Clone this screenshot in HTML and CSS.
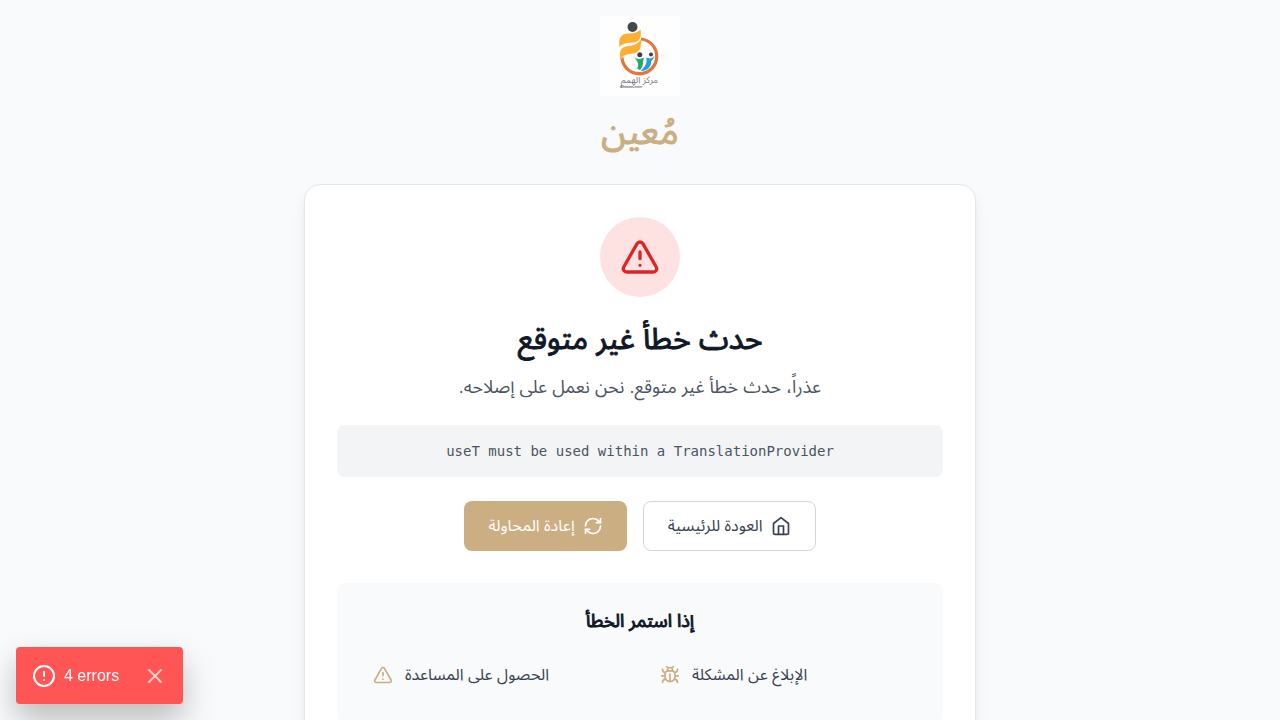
FILE: index.html
```html
<!DOCTYPE html>
<html lang="ar" dir="rtl">
<head>
<meta charset="utf-8">
<meta name="viewport" content="width=device-width, initial-scale=1">
<title>مُعين</title>
<link rel="stylesheet" href="styles.css">
</head>
<body>
<main class="page">
  <header class="brand">
    <svg class="brand-logo" viewBox="0 0 80 80" role="img" aria-label="مركز الهمم">
      <rect width="80" height="80" fill="#fefefe"/>
      <path d="M41 21.500A19 19 0 1 1 20.500 43L23.500 41A15.800 15.800 0 1 0 41 24.500Z" fill="#e2763c"/>
      <circle cx="32.500" cy="11" r="5" fill="#46464f"/>
      <path d="M19.500 31C18 22 21.500 17.500 28 17.500C34 17.500 37 17 40.500 13.500C42 22 39 26 33 26.500C27 27 23 27 19.500 31Z" fill="#fbb033"/>
      <path d="M20.500 43.500C18.500 35 21.500 30.500 28 30C34 29.500 37.500 28 41 23.500C41.800 33 38.500 37 33 37.500C27 38 23 39 20.500 43.500Z" fill="#fbb033"/>
      <circle cx="39.800" cy="38.800" r="2.500" fill="#3d3f49"/>
      <circle cx="51" cy="38.500" r="2" fill="#3d3f49"/>
      <path d="M33 40.500C36.500 43.500 40 43.500 44 41.500C42.500 46 44 50 40 54L37 52.500C39.500 49 38 44.500 33 40.500Z" fill="#27a866"/>
      <path d="M54.500 39.500C52 43.500 49 42.500 46 41.500C48 46 45 51 40.500 55C48 55 51.500 50 51 45.500C52.500 44 54 42.500 54.500 39.500Z" fill="#239fd8"/>
      <text class="logo-name" x="39.500" y="67" text-anchor="middle">مركز الهمم</text>
      <text class="logo-sub" x="31" y="72" text-anchor="middle" direction="ltr">AlhimamCenter</text>
    </svg>
    <h1 class="brand-name">مُعين</h1>
  </header>

  <section class="card">
    <div class="alert-badge">
      <svg class="icon icon-large" viewBox="0 0 24 24"><path d="m21.730 18-8-14a2 2 0 0 0-3.480 0l-8 14A2 2 0 0 0 4 21h16a2 2 0 0 0 1.730-3Z"/><path d="M12 9v4M12 17h.01"/></svg>
    </div>
    <h2 class="card-title">حدث خطأ غير متوقع</h2>
    <p class="card-text">عذراً، حدث خطأ غير متوقع. نحن نعمل على إصلاحه.</p>
    <div class="error-message"><code dir="ltr">useT must be used within a TranslationProvider</code></div>
    <div class="actions">
      <button class="button button-outline" type="button">
        <svg class="icon" viewBox="0 0 24 24"><path d="m3 9 9-7 9 7v11a2 2 0 0 1-2 2H5a2 2 0 0 1-2-2z"/><path d="M9 22V12h6v10"/></svg>
        <span>العودة للرئيسية</span>
      </button>
      <button class="button button-primary" type="button">
        <svg class="icon" viewBox="0 0 24 24"><path d="M3 12a9 9 0 0 1 9-9 9.750 9.750 0 0 1 6.740 2.740L21 8"/><path d="M21 3v5h-5"/><path d="M21 12a9 9 0 0 1-9 9 9.750 9.750 0 0 1-6.740-2.740L3 16"/><path d="M8 16H3v5"/></svg>
        <span>إعادة المحاولة</span>
      </button>
    </div>
    <section class="help">
      <h3 class="help-title">إذا استمر الخطأ</h3>
      <div class="help-links">
        <a class="help-link" href="#report">
          <span>الإبلاغ عن المشكلة</span>
          <svg class="icon" viewBox="0 0 24 24"><path d="m8 2 1.880 1.880M14.120 3.880 16 2M9 7.130v-1a3.003 3.003 0 1 1 6 0v1"/><path d="M12 20c-3.300 0-6-2.700-6-6v-3a4 4 0 0 1 4-4h4a4 4 0 0 1 4 4v3c0 3.300-2.700 6-6 6M12 20v-9M6.530 9C4.600 8.800 3 7.100 3 5M6 13H2M3 21c0-2.100 1.700-3.900 3.800-4M20.970 5c0 2.100-1.600 3.800-3.500 4M22 13h-4M17.200 17c2.100.1 3.800 1.900 3.800 4"/></svg>
        </a>
        <a class="help-link" href="#support">
          <span>الحصول على المساعدة</span>
          <svg class="icon" viewBox="0 0 24 24"><path d="m21.730 18-8-14a2 2 0 0 0-3.480 0l-8 14A2 2 0 0 0 4 21h16a2 2 0 0 0 1.730-3Z"/><path d="M12 9v4M12 17h.01"/></svg>
        </a>
      </div>
    </section>
  </section>
</main>

<div class="toast" dir="ltr" role="alert">
  <svg class="icon icon-medium" viewBox="0 0 24 24"><circle cx="12" cy="12" r="10"/><path d="M12 8v4M12 16h.01"/></svg>
  <span>4 errors</span>
  <button class="toast-close" type="button" aria-label="Close">
    <svg class="icon icon-medium" viewBox="0 0 24 24"><path d="M18 6 6 18M6 6l12 12"/></svg>
  </button>
</div>
</body>
</html>
```

FILE: styles.css
```css
* {
  box-sizing: border-box;
}

body,
h1,
h2,
h3,
p {
  margin: 0;
}

body {
  background: #f9fafb;
  color: #111827;
  font-family: "Liberation Sans", "Noto Sans Arabic", sans-serif;
  font-size: 16px;
  line-height: 24px;
}

button {
  font: inherit;
  cursor: pointer;
}

.page {
  max-width: 704px;
  margin: 0 auto;
  padding: 16px;
  text-align: center;
}

.brand {
  display: flex;
  flex-direction: column;
  align-items: center;
  gap: 16px;
  margin-bottom: 32px;
}

.brand-logo {
  width: 80px;
  height: 80px;
  border-radius: 2px;
}

.logo-name {
  fill: #77777c;
  font-size: 9px;
}

.logo-sub {
  fill: #66666b;
  font-size: 3px;
  font-weight: 700;
}

.brand-name,
.card-title,
.help-title {
  font-weight: 400;
  -webkit-text-stroke: 1px currentColor;
}

.brand-name {
  color: #cbae82;
  font-size: 36px;
  line-height: 40px;
}

.card {
  padding: 32px;
  background: #fff;
  border: 1px solid #e5e7eb;
  border-radius: 16px;
  box-shadow: 0 10px 15px -3px rgb(0 0 0 / 10%), 0 4px 6px -4px rgb(0 0 0 / 10%);
}

.icon {
  flex: none;
  width: 20px;
  height: 20px;
  fill: none;
  stroke: currentColor;
  stroke-width: 2;
  stroke-linecap: round;
  stroke-linejoin: round;
}

.icon-medium {
  width: 24px;
  height: 24px;
}

.icon-large {
  width: 40px;
  height: 40px;
}

.alert-badge {
  display: flex;
  align-items: center;
  justify-content: center;
  width: 80px;
  height: 80px;
  margin: 0 auto 24px;
  border-radius: 50%;
  background: #fee2e2;
  color: #dc2626;
}

.card-title {
  margin-bottom: 16px;
  font-size: 30px;
  line-height: 36px;
}

.card-text {
  margin-bottom: 24px;
  color: #4b5563;
  font-size: 18px;
  line-height: 28px;
}

.error-message {
  display: flex;
  justify-content: center;
  margin-bottom: 24px;
  padding: 16px;
  border-radius: 8px;
  background: #f3f4f6;
  color: #4b5563;
  font-size: 14px;
  line-height: 20px;
}

.error-message code {
  font-family: "DejaVu Sans Mono", monospace;
  font-size: 14px;
}

.actions {
  display: flex;
  flex-wrap: wrap;
  justify-content: center;
  gap: 16px;
  margin-bottom: 32px;
}

.button {
  display: flex;
  align-items: center;
  gap: 8px;
  padding: 12px 24px;
  border: 1px solid #d1d5db;
  border-radius: 8px;
  background: #fff;
  color: #374151;
}

.button-primary {
  padding: 13px 24px;
  border: 0;
  background: #cbae82;
  color: #fff;
}

.help {
  padding: 24px;
  border-radius: 8px;
  background: #f9fafb;
}

.help-title {
  margin-bottom: 16px;
  font-size: 18px;
  line-height: 28px;
}

.help-links {
  display: grid;
  grid-template-columns: 1fr 1fr;
  gap: 16px;
}

.help-link {
  display: flex;
  align-items: center;
  justify-content: flex-end;
  gap: 12px;
  padding: 12px;
  border-radius: 8px;
  color: #374151;
  text-decoration: none;
}

.help-link .icon {
  color: #cbae82;
}

.toast {
  position: fixed;
  bottom: 16px;
  left: 16px;
  display: flex;
  align-items: center;
  gap: 8px;
  padding: 16px;
  border-radius: 4px;
  background: #f55;
  color: #fff;
  line-height: 25px;
  box-shadow: 0 16px 32px rgb(0 0 0 / 25%);
}

.toast-close {
  display: flex;
  margin-left: 16px;
  padding: 0;
  border: 0;
  background: transparent;
  color: #fff;
  opacity: 0.7;
}
```
